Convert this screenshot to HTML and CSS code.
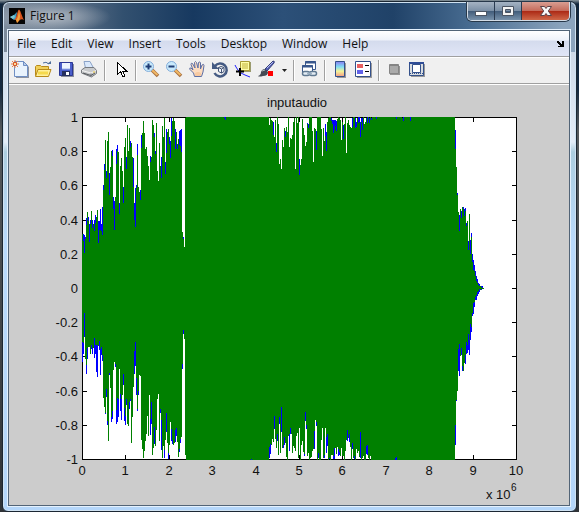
FILE: index.html
```html
<!DOCTYPE html>
<html lang="en">
<head>
<meta charset="utf-8">
<title>Figure 1</title>
<link rel="stylesheet" href="styles.css">
</head>
<body>
<div class="window">
  <header class="titlebar">
    <svg class="app-icon" viewBox="0 0 16 16" aria-hidden="true">
      <rect width="16" height="16" fill="#050505"/>
      <path d="M1 9 5 7 8 4 7 11 5 12Z" fill="#3f9fc4"/>
      <path d="M1 9 5 7 6 9 4 11Z" fill="#7fc4cc"/>
      <path d="M5 12C8 10 8 3 10 1.500C12 3 13 9 15 12C12 10 10 13 8 15C8 13 7 11 5 12Z" fill="#d9541e"/>
      <path d="M10 2C9.500 6 9 10 7 12L8 15C10 13 11 11 11 8Z" fill="#f2a23a"/>
    </svg>
    <h1 class="title">Figure 1</h1>
    <div class="controls">
      <button class="control minimize" aria-label="Minimize"><svg viewBox="0 0 14 12"><rect x="1.500" y="6.500" width="11" height="4" fill="#fff" stroke="#4c5563"/></svg></button>
      <button class="control maximize" aria-label="Maximize"><svg viewBox="0 0 14 12"><path d="M1.500 1.500h11v9h-11z M4.500 4.500v3h5v-3z" fill="#f4f4f4" stroke="#4c5563" fill-rule="evenodd"/></svg></button>
      <button class="control close" aria-label="Close"><svg viewBox="0 0 14 12"><path d="M1.500 1.500h4L7 3.500 8.500 1.500h4L9.300 6l3.200 4.500h-4L7 8.500 5.500 10.500h-4L4.700 6z" fill="#f8f8f8" stroke="#5b4348"/></svg></button>
    </div>
  </header>

  <main class="client">
    <nav class="menubar">
      <button>File</button><button>Edit</button><button>View</button><button>Insert</button><button>Tools</button><button>Desktop</button><button>Window</button><button>Help</button>
      <button class="dock" aria-label="Dock figure"><svg viewBox="0 0 7 6"><path d="M0 0h2v1h1v1h1v1h1V0h2v6H1V5h2V4H2V3H1V2H0z" fill="#000"/></svg></button>
    </nav>

    <div class="toolbar">
      <button class="tool" aria-label="New figure"><svg viewBox="0 0 18 18">
        <path d="M4 2h9l4 4v11H4z" fill="#8d93a0"/><path d="M2.500.500h9l4 4v11h-13z" fill="#e9f3fd" stroke="#6f8fc4"/><path d="M11.500.500v4h4z" fill="#b9cdea" stroke="#6f8fc4"/>
        <path d="M0 0l6 6M6 0 0 6M3-1v8M-1 3h8" stroke="#e8804b"/><circle cx="3" cy="3" r="1.600" fill="#fff0b0" stroke="#d9501f"/></svg></button>
      <button class="tool" aria-label="Open file"><svg viewBox="0 0 18 18">
        <path d="M8 2q3-2 6 1" fill="none" stroke="#4f6f9c"/><path d="M12 3h4V0z" fill="#4f6f9c"/>
        <path d="M.500 14.500v-9l1-1h4l1 1h7v9z" fill="#f0cf58" stroke="#b88a18"/><path d="M.500 15.500 3 8.500h13l-2.500 7z" fill="#fff09a" stroke="#b88a18"/><path d="M3 12h10" stroke="#f5d94c" stroke-width="3"/></svg></button>
      <button class="tool" aria-label="Save figure"><svg viewBox="0 0 18 18">
        <path d="M3 3h13v13H3z" fill="#8b8f9c"/><path d="M1.500 1.500h13v13h-13z" fill="#4b5fcb" stroke="#2b3795"/><path d="M4 2h8v6H4z" fill="#edf4ff"/><path d="M4 8h8" stroke="#9db4ea"/><path d="M4 10h8v5H4z" fill="#26305e"/><path d="M8 11h3v3H8z" fill="#fff"/></svg></button>
      <button class="tool" aria-label="Print figure"><svg viewBox="0 0 18 18">
        <path d="M4.500 7 3 .500h6L12.500 7z" fill="#d9e8fb" stroke="#8ba3c8"/><path d="M.500 9 4 6.500h9l2.500 3v3l-5 3.500L.500 12z" fill="#c8cacc" stroke="#777b80"/><path d="M1 9.500 10 12l5-2.500" fill="none" stroke="#f4f4f4"/><path d="M2 12l8 2.500 4-2.500" fill="none" stroke="#55585c"/><path d="M10 12.500v3" stroke="#70757c"/><path d="M12 11h2" stroke="#ecc63b"/></svg></button>
      <span class="separator"></span>
      <button class="tool" aria-label="Edit plot"><svg viewBox="0 0 18 18"><path d="M5.500 1.500v12l3-3 2.500 5.500 2-1-2.500-5h4z" fill="#fff" stroke="#000" shape-rendering="crispEdges"/></svg></button>
      <span class="separator"></span>
      <button class="tool" aria-label="Zoom in"><svg viewBox="0 0 18 18">
        <path d="M9 9l6 6" stroke="#a66f3f" stroke-width="3.500"/><path d="M9 9l5.500 5" stroke="#f1b765" stroke-width="2"/><circle cx="5.500" cy="5.500" r="5" fill="#c9eafc" stroke="#84aedb"/><path d="M2.500 5.500h6M5.500 2.500v6" stroke="#203d75" stroke-width="2"/></svg></button>
      <button class="tool" aria-label="Zoom out"><svg viewBox="0 0 18 18">
        <path d="M9 9l6 6" stroke="#a66f3f" stroke-width="3.500"/><path d="M9 9l5.500 5" stroke="#f1b765" stroke-width="2"/><circle cx="5.500" cy="5.500" r="5" fill="#c9eafc" stroke="#84aedb"/><path d="M2.500 5.500h6" stroke="#203d75" stroke-width="2"/></svg></button>
      <button class="tool" aria-label="Pan"><svg viewBox="0 0 18 18">
        <path d="M5.500 15.500 4.500 12 1 8.500q-1-2 1-1.500l2 2-2-5.500q0-2 1.500-1L6 7 5.500 1.500Q6.500-.500 7.500 1.500L9 7 9.500 1.500q1.500-1.500 2 .500L11.500 8l1.500-4q2-1.500 2 .500L14 11l-1.500 4.500z" fill="#fcdcc0" stroke="#5d6fa5"/><path d="M6 12q3-2 6 0v3H6z" fill="#f7c9a1"/></svg></button>
      <button class="tool" aria-label="Rotate 3D"><svg viewBox="0 0 18 18">
        <path d="M3 5a6.500 6.500 0 1 1-.500 7" fill="none" stroke="#455b83" stroke-width="2.500"/><path d="M0 1v7h7z" fill="#455b83"/><path d="M6.500 6.500 9 5.500l3 1v4L9.500 12l-3-1.500zM6.500 6.500l3 1.500 2.500-1.500M9.500 8v4" fill="#f3f6fb" stroke="#425476"/></svg></button>
      <button class="tool" aria-label="Data cursor"><svg viewBox="0 0 18 18">
        <path d="M0 4l1 2 2 3 3 3 4 2 5 2" fill="none" stroke="#2020ff"/><path d="M6 1h10v10H6z" fill="#9b9b6e"/><path d="M5.500.500h9v9h-9z" fill="#ffffa6" stroke="#a99b35"/><path d="M7 3h6M7 5h6M7 7h6" stroke="#c1b13d"/><path d="M1 10.500h8M5 7v8" stroke="#000" stroke-width="2"/></svg></button>
      <button class="tool" aria-label="Brush"><svg viewBox="0 0 18 18">
        <path d="M15 0q2 0 1 2L9 10 7 8z" fill="#5660b5" stroke="#353f79"/><path d="M15 1 9 7" stroke="#b8c1f3"/><path d="M7 8l3 3q0 4-5 4-4 1-5 0 3-1 3-4 1-3 4-3z" fill="#454b55"/><path d="M4 10l3-1" stroke="#aeb3bb"/><path d="M10 10h5v5h-5z" fill="#f00"/></svg></button>
      <button class="drop" aria-label="Brush options"><svg viewBox="0 0 5 3"><path d="M0 0h5L2.500 3z" fill="#222"/></svg></button>
      <span class="separator"></span>
      <button class="tool" aria-label="Link plot"><svg viewBox="0 0 18 18">
        <path d="M4.500.500h10v8h-10z" fill="#fff" stroke="#39578c"/><path d="M4 1.500h11" stroke="#39578c" stroke-width="2"/><path d="M1.500 4.500h10v8h-10z" fill="#fff" stroke="#39578c"/><path d="M1 5.500h11" stroke="#39578c" stroke-width="2"/><rect x="1.500" y="10.500" width="7" height="4" rx="2" fill="#e4edf4" stroke="#607991" stroke-width="1.500"/><rect x="8.500" y="10.500" width="7" height="4" rx="2" fill="#e4edf4" stroke="#607991" stroke-width="1.500"/><path d="M6 12.500h5" stroke="#9db1c3" stroke-width="2"/></svg></button>
      <span class="separator"></span>
      <button class="tool" aria-label="Insert colorbar"><svg viewBox="0 0 18 18">
        <defs><linearGradient id="spectrum" x2="0" y2="1"><stop stop-color="#8a7df0"/><stop offset=".35" stop-color="#7fdcf5"/><stop offset=".65" stop-color="#f5f598"/><stop offset="1" stop-color="#f39b85"/></linearGradient></defs><path d="M5 2h9v15H5z" fill="#9a9a9a"/><path d="M3.500.500h9v15h-9z" fill="url(#spectrum)" stroke="#34518b"/></svg></button>
      <button class="tool" aria-label="Insert legend"><svg viewBox="0 0 18 18">
        <path d="M2 2h15v15H2z" fill="#9a9a9a"/><path d="M.500.500h15v15H.500z" fill="#fff" stroke="#34518b"/><path d="M2 3h6v4H2z" fill="#e86060"/><path d="M2 9h6v4H2z" fill="#6262e8"/><path d="M10 4.500h4M10 10.500h4" stroke="#000" stroke-width="1"/></svg></button>
      <span class="separator"></span>
      <button class="tool" aria-label="Hide plot tools" disabled><svg viewBox="0 0 18 18"><path d="M4 5h10v9H4z" fill="#969696"/><path d="M3.500 3.500h9v9h-9z" fill="#aaa" stroke="#858585"/><path d="M3 4.500h10" stroke="#858585"/></svg></button>
      <button class="tool" aria-label="Show plot tools"><svg viewBox="0 0 18 18">
        <path d="M2 3h14v13H2z" fill="#999"/><path d="M.500 1.500h14v13H.500z" fill="#d8dce0" stroke="#34518b"/><path d="M0 2h15" stroke="#2f4c96" stroke-width="2"/><path d="M3.500 3.500h8v8h-8z" fill="#fff" stroke="#34518b"/><path d="M1 12.500h13" stroke="#34518b" stroke-dasharray="1 1"/></svg></button>
    </div>

    <svg class="figure" viewBox="0 0 560 420" role="img" aria-label="inputaudio waveform plot">
      <text class="label middle" x="288" y="22">inputaudio</text>
      <rect x="73" y="32" width="435" height="343" fill="#fff"/>
      <g id="axes" shape-rendering="crispEdges"></g>
      <g transform="translate(73 32)" shape-rendering="crispEdges">
        <path id="channel-left" fill="#0000ff"/>
        <path id="channel-right" fill="#008000"/>
      </g>
      <g id="ticks" class="label"></g>
      <text class="label" x="477" y="414">x 10</text>
      <text class="exponent" x="502" y="406">6</text>
    </svg>
  </main>
</div>
<script src="plot.js"></script>
</body>
</html>
```
FILE: styles.css
```css
* {
  box-sizing: border-box;
}

body {
  margin: 0;
  min-height: 100vh;
  display: flex;
  background: linear-gradient(#8b979d 0, #10263d 4px, #152a40 90px, #55595c 130px, #2f3337 100%);
  font-family: "Open Sans", "Noto Sans", sans-serif;
  font-size: 12px;
  color: #111;
}

button {
  margin: 0;
  padding: 0;
  border: 0;
  background: none;
  font: inherit;
  color: inherit;
}

svg {
  display: block;
}

.window {
  flex: 1;
  display: flex;
  flex-direction: column;
  margin: 1px 2px 0;
  padding: 0 6px 5px 5px;
  border: 1px solid #1b2733;
  border-radius: 7px 7px 6px 6px;
  box-shadow: inset 0 0 0 1px #cfe2f2;
  background:
    radial-gradient(ellipse 60px 16px at 48px 15px, #b2bac4, transparent),
    linear-gradient(90deg, #7d8c9c 0, #5b6f86 70px, #32506f 120px, #173960 190px, #2c5078 280px, #204268 390px, #496d92 470px, #8ba4bd 560px) left top / 100% 50px no-repeat,
    linear-gradient(#c2cfde 0, #e4edf8 140px, #accddf 150px, #b9dafc 240px, #b4d6fa 100%);
}

.titlebar {
  display: flex;
  height: 27px;
  padding-left: 1px;
}

.app-icon {
  width: 16px;
  height: 16px;
  margin: 6px 5px 0 0;
}

.title {
  margin: 0;
  font-size: 12px;
  line-height: 28px;
  font-weight: 400;
}

.controls {
  display: flex;
  height: 19px;
  margin-left: auto;
  border: 1px solid #d4dde7;
  border-top: 0;
  border-radius: 0 0 5px 5px;
  overflow: hidden;
  box-shadow: 0 0 0 1px #27384a;
}

.control {
  display: grid;
  place-items: center;
  width: 27px;
  border-right: 1px solid #2a3b50;
  background: linear-gradient(#a5b3c3, #7c90a6 48%, #405b79 50%, #7891aa);
}

.control svg {
  width: 14px;
  height: 12px;
}

.control.close {
  width: 47px;
  border-right: 0;
  background: linear-gradient(#d99e92, #c56c5c 48%, #ab2814 50%, #cf6849);
}

.client {
  flex: 1;
  margin-top: 1px;
  border: 1px solid #526477;
  box-shadow: 0 0 0 1px #e4f1fd;
  background: #ccc;
}

.menubar {
  display: flex;
  align-items: center;
  gap: 15px;
  height: 26px;
  padding: 0 5px 0 8px;
  border-bottom: 1px solid #a0a0a0;
  background: linear-gradient(#fff, #eff2fa 9px, #d4dbed 10px, #e1e6f7 25px);
}

.menubar .dock {
  margin-left: auto;
}

.dock svg {
  width: 7px;
  height: 6px;
}

.toolbar {
  display: flex;
  align-items: center;
  height: 28px;
  padding-bottom: 2px;
  border-top: 1px solid #fff;
  border-bottom: 1px solid #fff;
  box-shadow: inset 0 -1px #a0a0a0;
  background: #f0f0f0;
}

.tool {
  flex: none;
  width: 23px;
  padding-left: 3px;
}

.tool svg {
  width: 18px;
  height: 18px;
  overflow: visible;
}

.drop {
  width: 12px;
  padding-left: 4px;
}

.drop svg {
  width: 5px;
  height: 3px;
}

.separator {
  flex: none;
  width: 2px;
  height: 21px;
  margin: 0 3px;
  border-left: 1px solid #a0a0a0;
  border-right: 1px solid #fff;
}

.figure {
  width: 100%;
  height: auto;
}

.label,
.exponent {
  font-family: "Liberation Sans", Arial, sans-serif;
  font-size: 13px;
  fill: #111;
}

.exponent {
  font-size: 10px;
}

.middle {
  text-anchor: middle;
}
```
FILE: plot.js
```js
const WIDTH = 435, HEIGHT = 343;

// Each entry is "outer limit/inner limit" of the signal envelope for one column,
// in thirds of a plot unit. A single number means both channels end together.
const introTop = "387 387/408 390/443 396/402 340/360 321 336/348 357/411 345/357 318 345/369 357 345/378 330/354 336 315 348/414 348/376 312/375 357/378 306/390 240/255 177/195 105 198/219 108 81 204/270 186 138 135/153 276/312 288/375 276 132/177 120/138 141 294/327 182 159 198 246/294 126 99 156/192 60 138 69 108/126 114 156 159/246 294/345 249/366 240/249 117/150 246 261 255/285 90/129 84 48 84 132 126 153 183 225 153/171 156 45 60 84/96 138/147 54 198 228 114 183 156/219 63 96 38 171/207 72/144 81 72 96/117 108/159 38/93 48 38 48 72/132 81 117/132 102 78/120 75/123 72/141 381 396/402 426 38";
const introBottom = "231/171 207/174 156/84 222 267/240 222/190 186 186 207 192/180 207/189 189 219/159 207/180 261/180 276/180 183 195/168 270/192 210/186 228/210 339 366 387/384 336/312 420/408 468 270/264 309 411/396 402/378 255 231 246/237 417/375 411/339 396/342 252 378/327 405/342 330 300/267 408/369 420/393 360/342 417 423 372/351 348/342 474 396 306 267/198 243/171 330/279 378/372 330/318 270 273 465 492 519 498 468 447 393 453 330 450/402 417/351 510 489 477/426 483 435 342 327 468 384/372 495/405 519 483 519/495 465 441/384 474 522/504 480 411 468/432 477/465 480 474 471/435 453/429 471 516 501/492 474/462 456 252/237 147/135 162 510";
const tailTop = "75/131 186 264/270 321 330/378 312 318/339 306 306/312 312/333 309/318 354/363 348 408/435 327 405/447 384/396 447/471 465/495 480/498 498/513 513/528 522/534 534/540 537/543 543 543/546 543/549 549";
const tailBottom = "480/420 348/345 318 258/192 272/178 212 210/190 258/243 258 234 237/210 206/171 204/180 195/147 210/165 165/117 141/126 93/84 87/54 66/51 45/36 45/30 33/21 27/18 21/12 15 15/12 12 12";

// Isolated gaps in the clipped middle section, keyed by position.
const gapsTop = "12:81/84 15:81/90 147:105 150:84 153:90 156:93 159:96/135 162:141 165:90 168:159/186 174:102 177:222 180:207 183:237 186:150 189:171 192:114 195:123/141 198:111 201:126 207:171 210:144 213:147 216:135 219:96 222:84 225:237 231:99 237:207/255 240:225 243:207 246:87 249:114 252:135 255:168 258:156 261:99/103 264:102/114 276:123 279:216 282:114 285:117 288:123/180 303:117 306:198 309:114 312:153 315:102/138 318:126/183 321:96 324:84 333:84/93 336:90/102 339:90/129 342:90/120 345:90/108 348:93/123 351:87 357:84 360:90 363:150 366:96 369:105/147 372:102 378:189 381:99 384:90 387:105 390:111 393:114 396:84/111 405:84/114 408:96/111 411:84 414:81/99 417:81/96 420:96/141 423:84/96 426:84/120 432:102 435:96 438:84 441:81/99 447:84/99 453:84/90 468:81/87 528:81/87 546:85 549:81/92 570:81/92";
const gapsBottom = "93:209/206 147:204/171 150:192/162 153:165 156:147 159:156 162:117/78 165:147 168:174 171:153/132 174:195 177:102/81 180:189 183:126/51 186:174 189:174/165 192:165/141 195:159 198:201 204:138 207:183/132 210:132/114 213:132 216:189 219:168 222:174 225:183 228:138 231:129 234:204 237:114 243:165 246:153 249:186 252:198/192 255:93/66 258:117/105 261:198 264:189 270:204 273:201 276:183 279:177 282:177/123 285:90 288:108/96 294:204/189 303:150 306:114 309:204 312:204/195 315:114 318:189/141 321:168/132 327:207/204 333:195 336:195 339:207/198 342:207/174 345:174 348:192 351:171 354:198/177 357:195/186 360:198 363:174 366:198 369:198 375:183 378:150 381:153/120 384:144 387:156/132 390:171 396:177/159 399:204 402:207/198 408:177 411:189 414:183 417:201 420:204/126 426:204 429:198 438:192/168 441:195/165 444:204 450:198 525:209/204 528:209/201";

const top_ = Array.from({ length: WIDTH }, () => [0, 0]);
const bottom = Array.from({ length: WIDTH }, () => [HEIGHT, HEIGHT]);

function limits(text, offset) {
  const [outer, inner = outer] = text.split("/").map(Number);
  return [Math.round(outer / 3 + offset), Math.round(inner / 3 + offset)];
}
function fillRun(target, data, start, offset) {
  data.split(" ").forEach((item, i) => { target[start + i] = limits(item, offset); });
}
function fillGaps(target, data, offset) {
  data.split(" ").forEach(item => {
    const [x, value] = item.split(":");
    target[138 + x / 3] = limits(value, offset);
  });
}

fillRun(top_, introTop, 0, -12);
fillRun(bottom, introBottom, 0, 168);
fillGaps(top_, gapsTop, -27);
fillGaps(bottom, gapsBottom, 273);
fillRun(top_, tailTop, 373, -12);
fillRun(bottom, tailBottom, 373, 168);

const end = 373 + tailTop.split(" ").length;
function envelope(channel) {
  let d = "";
  for (let x = 0; x < end; x++) {
    const y0 = top_[x][channel], y1 = bottom[x][channel];
    if (y1 > y0) d += `M${x} ${y0}h1V${y1}h-1z`;
  }
  return d;
}
document.getElementById("channel-left").setAttribute("d", envelope(0));
document.getElementById("channel-right").setAttribute("d", envelope(1));

let marks = "M73.5 32.5h434v342h-434z";
let labels = "";
for (let i = 0; i <= 10; i++) {
  const x = 73 + Math.round(i * 43.4), y = 32 + Math.round(i * 34.2);
  marks += `M${x + 0.5} 32v5M${x + 0.5} 375v-5M73 ${y + 0.5}h5M508 ${y + 0.5}h-5`;
  labels += `<text class="middle" x="${x}" y="390">${i}</text>`;
  labels += `<text x="69" y="${y + 5}" text-anchor="end">${+(1 - i * 0.2).toFixed(1)}</text>`;
}
document.getElementById("axes").innerHTML = `<path d="${marks}" fill="none" stroke="#000"/>`;
document.getElementById("ticks").innerHTML = labels;
```
